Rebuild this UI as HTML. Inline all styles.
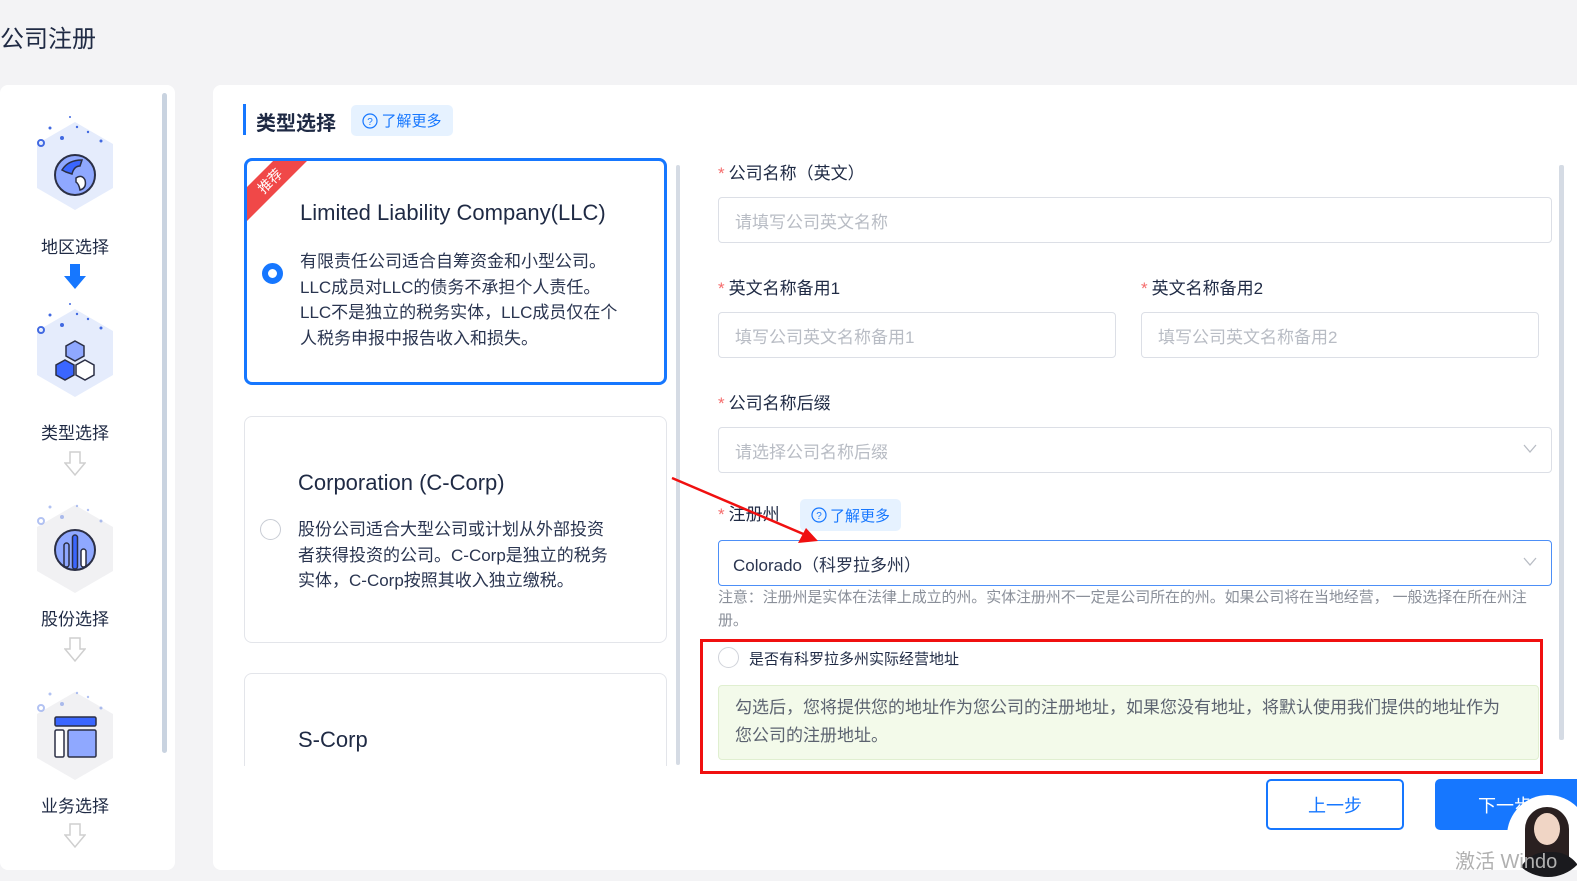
<!DOCTYPE html>
<html><head><meta charset="utf-8"><style>
*{box-sizing:border-box;margin:0;padding:0}
body{width:1577px;height:881px;background:#f3f3f5;position:relative;overflow:hidden;font-family:"Liberation Sans","Noto Sans CJK SC",sans-serif;color:#1f2a44}
.a{position:absolute;white-space:nowrap}
.card{position:absolute;background:#fff;border-radius:8px}
.lbl{font-size:17px;color:#1f2a44;line-height:20px}
.lbl b{color:#f56c6c;font-weight:normal;margin-right:4px}
.inp{position:absolute;border:1px solid #dcdfe6;border-radius:4px;background:#fff;font-size:17px;color:#b8bcc4;padding-left:16px;display:flex;align-items:center}
.chev{position:absolute;right:14px;top:50%;margin-top:-6px}
.steplbl{position:absolute;left:0;width:150px;text-align:center;font-size:17px;color:#1f2a44}
.hex{position:absolute;left:37px;width:76px;height:88px;clip-path:polygon(50% 0,100% 25%,100% 75%,50% 100%,0 75%,0 25%)}
.box{position:absolute;left:244px;width:423px;border-radius:8px;background:#fff}
.desc{font-size:17px;line-height:25.5px;color:#2a3550}
.rad{position:absolute;border-radius:50%}
.badge{position:absolute;background:#e6f2ff;border-radius:5px;color:#1677ff;font-size:15px;display:flex;align-items:center;justify-content:center}
</style></head><body>
<div class="a" style="left:0;top:19px;font-size:24px;color:#1f2a44">公司注册</div>

<div class="card" style="left:0;top:85px;width:175px;height:785px"></div>
<div class="a" style="left:162px;top:93px;width:5px;height:660px;background:#c9d3e0;border-radius:3px"></div>

<div class="hex" style="top:122px;background:#e5ecfc"></div>
<svg class="a" style="left:30px;top:110px" width="90" height="50"><circle cx="11" cy="33" r="3" fill="none" stroke="#4169e1" stroke-width="2"/><circle cx="32" cy="28" r="2" fill="#4169e1"/><circle cx="20" cy="18" r="1.5" fill="#4169e1"/><circle cx="47" cy="17" r="1.2" fill="#4169e1"/><circle cx="58" cy="22" r="1.2" fill="#4169e1"/><circle cx="71" cy="31" r="1.5" fill="#4169e1"/><circle cx="40" cy="7" r="1" fill="#4169e1"/></svg>
<svg class="a" style="left:54px;top:154px" width="42" height="42"><circle cx="21" cy="21" r="20" fill="#8fa8ff" stroke="#2b2f45" stroke-width="2"/><path d="M8 16 Q14 6 28 6 L26 12 Q20 12 18 20 L12 18 Z" fill="#3a66ff" stroke="#2b2f45" stroke-width="1.5"/><path d="M22 24 Q28 20 31 26 Q33 34 26 36 Q25 30 22 28 Z" fill="#fff" stroke="#2b2f45" stroke-width="1.5"/></svg>
<div class="steplbl" style="top:233px">地区选择</div>
<svg class="a" style="left:64px;top:264px" width="22" height="26"><path d="M6 0 H16 V12 H22 L11 25 L0 12 H6 Z" fill="#1677ff"/></svg>

<div class="hex" style="top:309px;background:#e5ecfc"></div>
<svg class="a" style="left:30px;top:297px" width="90" height="50"><circle cx="11" cy="33" r="3" fill="none" stroke="#4169e1" stroke-width="2"/><circle cx="32" cy="28" r="2" fill="#4169e1"/><circle cx="20" cy="18" r="1.5" fill="#4169e1"/><circle cx="47" cy="17" r="1.2" fill="#4169e1"/><circle cx="58" cy="22" r="1.2" fill="#4169e1"/><circle cx="71" cy="31" r="1.5" fill="#4169e1"/><circle cx="40" cy="7" r="1" fill="#4169e1"/></svg>
<svg class="a" style="left:52px;top:340px" width="46" height="44"><polygon points="23,1 32,6 32,16 23,21 14,16 14,6" fill="#8fa8ff" stroke="#2b2f45" stroke-width="1.5"/><polygon points="13,20 22,25 22,35 13,40 4,35 4,25" fill="#3a66ff" stroke="#2b2f45" stroke-width="1.5"/><polygon points="33,20 42,25 42,35 33,40 24,35 24,25" fill="#fff" stroke="#2b2f45" stroke-width="1.5"/></svg>
<div class="steplbl" style="top:419px">类型选择</div>
<svg class="a" style="left:64px;top:451px" width="22" height="26"><path d="M6 1 H16 V12 H21 L11 24 L1 12 H6 Z" fill="none" stroke="#cfcfcf" stroke-width="1.5"/></svg>

<div class="hex" style="top:505px;background:#f1f1f3"></div>
<svg class="a" style="left:30px;top:493px" width="90" height="50" opacity=".4"><circle cx="11" cy="28" r="3" fill="none" stroke="#4169e1" stroke-width="2"/><circle cx="32" cy="24" r="2" fill="#4169e1"/><circle cx="20" cy="14" r="1.5" fill="#4169e1"/><circle cx="47" cy="13" r="1.2" fill="#4169e1"/><circle cx="58" cy="17" r="1.2" fill="#4169e1"/><circle cx="71" cy="28" r="1.5" fill="#4169e1"/></svg>
<svg class="a" style="left:54px;top:529px" width="42" height="42"><circle cx="21" cy="21" r="20" fill="#8fa8ff" stroke="#2b2f45" stroke-width="2"/><rect x="10" y="14" width="5" height="24" rx="2.5" fill="#8fa8ff" stroke="#2b2f45" stroke-width="1.5"/><rect x="18.5" y="6" width="5" height="34" rx="2.5" fill="#3a66ff" stroke="#2b2f45" stroke-width="1.5"/><rect x="27" y="20" width="5" height="18" rx="2.5" fill="#fff" stroke="#2b2f45" stroke-width="1.5"/></svg>
<div class="steplbl" style="top:605px">股份选择</div>
<svg class="a" style="left:64px;top:637px" width="22" height="26"><path d="M6 1 H16 V12 H21 L11 24 L1 12 H6 Z" fill="none" stroke="#cfcfcf" stroke-width="1.5"/></svg>

<div class="hex" style="top:692px;background:#f1f1f3"></div>
<svg class="a" style="left:30px;top:680px" width="90" height="50" opacity=".4"><circle cx="11" cy="28" r="3" fill="none" stroke="#4169e1" stroke-width="2"/><circle cx="32" cy="24" r="2" fill="#4169e1"/><circle cx="20" cy="14" r="1.5" fill="#4169e1"/><circle cx="47" cy="13" r="1.2" fill="#4169e1"/><circle cx="58" cy="17" r="1.2" fill="#4169e1"/><circle cx="71" cy="28" r="1.5" fill="#4169e1"/></svg>
<svg class="a" style="left:54px;top:716px" width="44" height="44"><rect x="1" y="1" width="41" height="9" rx="1.5" fill="#3a66ff" stroke="#2b2f45" stroke-width="1.5"/><rect x="1" y="14" width="9" height="27" rx="1.5" fill="#fff" stroke="#2b2f45" stroke-width="1.5"/><rect x="14" y="14" width="28" height="27" rx="1.5" fill="#8fa8ff" stroke="#2b2f45" stroke-width="1.5"/></svg>
<div class="steplbl" style="top:792px">业务选择</div>
<svg class="a" style="left:64px;top:823px" width="22" height="26"><path d="M6 1 H16 V12 H21 L11 24 L1 12 H6 Z" fill="none" stroke="#cfcfcf" stroke-width="1.5"/></svg>

<div class="card" style="left:213px;top:85px;width:1380px;height:785px"></div>
<div class="a" style="left:243px;top:104px;width:3px;height:31px;background:#1677ff"></div>
<div class="a" style="left:256px;top:107px;font-size:20px;font-weight:bold;color:#1f2a44">类型选择</div>
<div class="badge" style="left:351px;top:105px;width:102px;height:31px"><svg width="16" height="16" style="margin-right:3px"><circle cx="8" cy="8" r="7" fill="none" stroke="#1677ff" stroke-width="1.2"/><text x="8" y="12" font-size="10" text-anchor="middle" fill="#1677ff" font-family="Liberation Sans">?</text></svg>了解更多</div>

<div class="box" style="top:158px;height:227px;border:3px solid #1677ff;overflow:hidden">
  <div class="a" style="left:-22px;top:8px;width:90px;height:24px;background:#f04848;transform:rotate(-45deg);color:#fff;font-size:14px;text-align:center;line-height:24px">推荐</div>
  <div class="a" style="left:53px;top:39px;font-size:22px;color:#1f2a44">Limited Liability Company(LLC)</div>
  <div class="rad" style="left:15px;top:102px;width:21px;height:21px;border:6px solid #1677ff"></div>
  <div class="a desc" style="left:53px;top:88px">有限责任公司适合自筹资金和小型公司。<br>LLC成员对LLC的债务不承担个人责任。<br>LLC不是独立的税务实体，LLC成员仅在个<br>人税务申报中报告收入和损失。</div>
</div>
<div class="box" style="top:416px;height:227px;border:1px solid #e3e5ea">
  <div class="a" style="left:53px;top:53px;font-size:22px;color:#1f2a44">Corporation (C-Corp)</div>
  <div class="rad" style="left:15px;top:102px;width:21px;height:21px;border:1.5px solid #c8ccd4"></div>
  <div class="a desc" style="left:53px;top:100px">股份公司适合大型公司或计划从外部投资<br>者获得投资的公司。C-Corp是独立的税务<br>实体，C-Corp按照其收入独立缴税。</div>
</div>
<div class="box" style="top:673px;height:93px;border:1px solid #e3e5ea;border-bottom:none;border-radius:8px 8px 0 0">
  <div class="a" style="left:53px;top:53px;font-size:22px;color:#1f2a44">S-Corp</div>
</div>
<div class="a" style="left:676px;top:165px;width:4px;height:600px;background:#d5dbe4;border-radius:2px"></div>

<div class="a lbl" style="left:718px;top:164px"><b>*</b>公司名称（英文）</div>
<div class="inp" style="left:718px;top:197px;width:834px;height:46px">请填写公司英文名称</div>
<div class="a lbl" style="left:718px;top:279px"><b>*</b>英文名称备用1</div>
<div class="inp" style="left:718px;top:312px;width:398px;height:46px">填写公司英文名称备用1</div>
<div class="a lbl" style="left:1141px;top:279px"><b>*</b>英文名称备用2</div>
<div class="inp" style="left:1141px;top:312px;width:398px;height:46px">填写公司英文名称备用2</div>
<div class="a lbl" style="left:718px;top:394px"><b>*</b>公司名称后缀</div>
<div class="inp" style="left:718px;top:427px;width:834px;height:46px">请选择公司名称后缀<svg class="chev" width="14" height="10"><path d="M1 1 L7 8 L13 1" fill="none" stroke="#b8bcc4" stroke-width="1.3"/></svg></div>
<div class="a lbl" style="left:718px;top:505px"><b>*</b>注册州</div>
<div class="badge" style="left:800px;top:499px;width:101px;height:32px"><svg width="16" height="16" style="margin-right:3px"><circle cx="8" cy="8" r="7" fill="none" stroke="#1677ff" stroke-width="1.2"/><text x="8" y="12" font-size="10" text-anchor="middle" fill="#1677ff" font-family="Liberation Sans">?</text></svg>了解更多</div>
<div class="inp" style="left:718px;top:540px;width:834px;height:46px;border-color:#4d8ff7;color:#2a3550;padding-left:14px">Colorado（科罗拉多州）<svg class="chev" width="14" height="10"><path d="M1 1 L7 8 L13 1" fill="none" stroke="#b8bcc4" stroke-width="1.3"/></svg></div>
<div class="a" style="left:718px;top:586px;width:836px;white-space:normal;font-size:15px;line-height:23px;color:#8a8f99;letter-spacing:-0.1px">注意：注册州是实体在法律上成立的州。实体注册州不一定是公司所在的州。如果公司将在当地经营， 一般选择在所在州注册。</div>

<div class="a" style="left:700px;top:639px;width:843px;height:135px;border:3px solid #f01010"></div>
<div class="rad" style="left:718px;top:647px;width:21px;height:21px;border:1px solid #d0d3da"></div>
<div class="a" style="left:749px;top:648px;font-size:15px;color:#1f2a44">是否有科罗拉多州实际经营地址</div>
<div class="a" style="left:718px;top:685px;width:821px;height:75px;background:#f3faea;border:1px solid #e0efd0;border-radius:4px;padding:8px 36px 0 16px;white-space:normal;font-size:17px;line-height:28px;color:#5c6370">勾选后，您将提供您的地址作为您公司的注册地址，如果您没有地址，将默认使用我们提供的地址作为您公司的注册地址。</div>
<div class="a" style="left:1559px;top:165px;width:5px;height:575px;background:#d5dbe4;border-radius:2px"></div>

<svg class="a" style="left:660px;top:470px" width="170" height="80"><line x1="12" y1="8" x2="148" y2="66" stroke="#f01010" stroke-width="2.5"/><polygon points="158,71 138,73 146,58" fill="#f01010"/></svg>

<div class="a" style="left:1266px;top:779px;width:138px;height:51px;border:2px solid #1677ff;border-radius:5px;color:#1677ff;font-size:18px;display:flex;align-items:center;justify-content:center">上一步</div>
<div class="a" style="left:1435px;top:779px;width:150px;height:51px;background:#1677ff;border-radius:5px;color:#fff;font-size:18px;padding:13px 0 0 43px">下一步</div>
<div class="a" style="left:1507px;top:795px;width:82px;height:82px;border-radius:50%;background:#fff;overflow:hidden">
<div class="a" style="left:18px;top:12px;width:44px;height:62px;border-radius:22px 22px 10px 10px;background:#2a2020"></div>
<div class="a" style="left:27px;top:18px;width:26px;height:32px;border-radius:50%;background:#f0d5c5"></div>
<div class="a" style="left:10px;top:57px;width:66px;height:40px;border-radius:30px 30px 0 0;background:#1a1a1e"></div>
</div>
<div class="a" style="left:1455px;top:845px;font-size:20px;color:#b0b0b0">激活 Windo</div>
</body></html>
